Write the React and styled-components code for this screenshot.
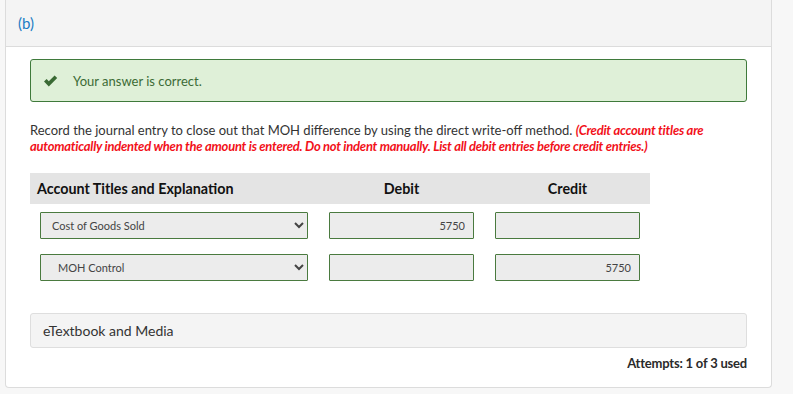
import React from "react";
import styled, { createGlobalStyle } from "styled-components";

const Global = createGlobalStyle`
  body {
    margin: 0;
    background: #f7f7f7;
    font-family: Lato, "Open Sans", sans-serif;
    color: #333;
  }
`;

const Card = styled.div`
  margin-left: 5px;
  width: 765px;
  background: #fff;
  border: 1px solid #dcdcdc;
  border-top: none;
  border-radius: 0 0 4px 4px;
`;

const Header = styled.div`
  height: 46px;
  background: #f4f4f4;
  border-bottom: 1px solid #dcdcdc;
  display: flex;
  align-items: center;
  padding-left: 12px;
  & span {
    font-size: 15px;
    color: #1b7dc4;
  }
`;

const Body = styled.div`
  padding: 12px 24px 16px 24px;
`;

const Success = styled.div`
  height: 41px;
  display: flex;
  align-items: center;
  background: #dff0d8;
  border: 1px solid #3f7a3b;
  border-radius: 3px;
  padding-left: 12px;
  color: #3c6b35;
  font-size: 13px;
  & svg {
    margin-right: 15px;
  }
`;

const Question = styled.p`
  margin: 20px 0 0 0;
  font-size: 13px;
  line-height: 16px;
  color: #333;
  & em {
    color: #f2111a;
    font-weight: 700;
    letter-spacing: -0.25px;
  }
`;

const Table = styled.div`
  width: 620px;
  margin-top: 19px;
`;

const HeadRow = styled.div`
  height: 31px;
  background: #e4e4e4;
  display: grid;
  grid-template-columns: 271px 145px 145px;
  column-gap: 21px;
  align-items: center;
  padding-left: 7px;
  font-size: 14.3px;
  font-weight: 700;
  color: #111;
`;

const HeadCell = styled.div`
  text-align: ${(p) => (p.$center ? "center" : "left")};
`;

const Row = styled.div`
  display: grid;
  grid-template-columns: 268px 145px 145px;
  column-gap: 21px;
  padding: 0 10px;
  margin-top: ${(p) => p.$gap}px;
`;

const Select = styled.select`
  height: 27px;
  background-color: #ececec;
  border: 1px solid #4a7a3f;
  border-radius: 1px;
  font-family: Lato, sans-serif;
  font-size: 11px;
  color: #444;
  padding-left: ${(p) => (p.$indent ? 13 : 7)}px;
  outline: none;
`;

const Amount = styled.input`
  height: 27px;
  box-sizing: border-box;
  width: 145px;
  background: #ececec;
  border: 1px solid #4a7a3f;
  border-radius: 1px;
  font-family: Lato, sans-serif;
  font-size: 11px;
  color: #444;
  text-align: right;
  padding-right: 8px;
  outline: none;
`;

const Media = styled.div`
  margin-top: 32px;
  height: 33px;
  display: flex;
  align-items: center;
  padding-left: 12px;
  background: #f4f4f4;
  border: 1px solid #dedede;
  border-radius: 3px;
  font-size: 14px;
  color: #333;
`;

const Attempts = styled.div`
  margin-top: 7px;
  line-height: 16px;
  text-align: right;
  font-size: 13px;
  font-weight: 700;
  color: #2a2a2a;
  letter-spacing: -0.2px;
`;

const Check = () => (
  <svg width="15" height="12" viewBox="0 0 15 12">
    <path d="M1 6.5 L3.6 4 L5.8 6.3 L11.6 0.6 L14.2 3.1 L5.8 11.4 Z" fill="#3a6a34" />
  </svg>
);

const rows = [
  { account: "Cost of Goods Sold", debit: "5750", credit: "", indent: false },
  { account: "MOH Control", debit: "", credit: "5750", indent: true },
];

export default function App() {
  return (
    <>
      <Global />
      <Card>
        <Header>
          <span>(b)</span>
        </Header>
        <Body>
          <Success>
            <Check />
            Your answer is correct.
          </Success>
          <Question>
            Record the journal entry to close out that MOH difference by using the direct
            write-off method.{" "}
            <em>
              (Credit account titles are automatically indented when the amount is entered. Do
              not indent manually. List all debit entries before credit entries.)
            </em>
          </Question>
          <Table>
            <HeadRow>
              <HeadCell>Account Titles and Explanation</HeadCell>
              <HeadCell $center>Debit</HeadCell>
              <HeadCell $center>Credit</HeadCell>
            </HeadRow>
            {rows.map((r, i) => (
              <Row key={i} $gap={i === 0 ? 8 : 15}>
                <Select $indent={r.indent} defaultValue={r.account}>
                  <option>{r.account}</option>
                </Select>
                <Amount readOnly value={r.debit} />
                <Amount readOnly value={r.credit} />
              </Row>
            ))}
          </Table>
          <Media>eTextbook and Media</Media>
          <Attempts>Attempts: 1 of 3 used</Attempts>
        </Body>
      </Card>
    </>
  );
}
